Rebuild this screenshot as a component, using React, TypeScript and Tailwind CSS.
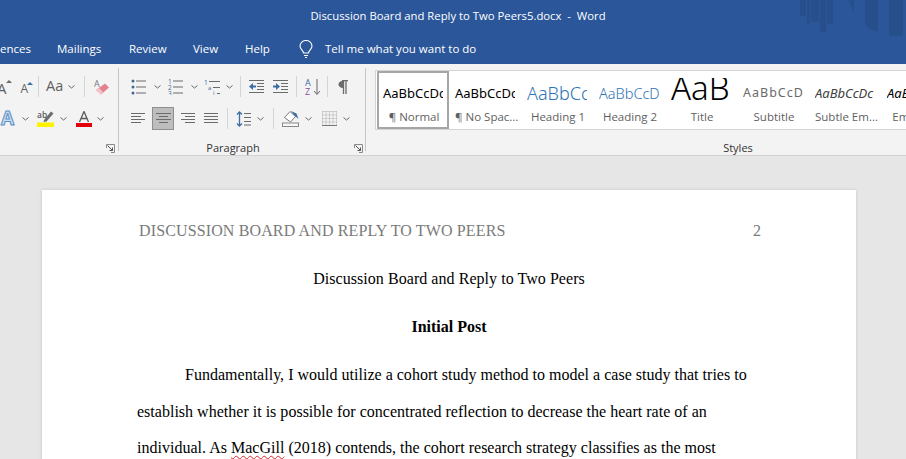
import React from "react";

const G = "#6b6b6b";
const Chev = ({ className = "" }: { className?: string }) => (
  <svg width="7" height="4" viewBox="0 0 7 4" className={`shrink-0 ${className}`}>
    <path d="M.5.5 3.5 3 6.5.5" fill="none" stroke="#666" strokeWidth="1" />
  </svg>
);
const Sep = ({ className = "" }: { className?: string }) => <div className={`w-px h-[21px] bg-[#d4d4d4] shrink-0 ${className}`} />;

const Lines = ({ rows, className = "" }: { rows: [number, number][]; className?: string }) => (
  <svg width="15" height="13" viewBox="0 0 15 13" className={`shrink-0 ${className}`}>
    {rows.map(([a, b], i) => (
      <path key={i} d={`M${a} ${1.5 + i * 3}H${b}`} stroke={G} strokeWidth="1" />
    ))}
  </svg>
);

const Launcher = ({ className = "" }: { className?: string }) => (
  <svg width="9" height="9" viewBox="0 0 9 9" className={`shrink-0 ${className}`}>
    <path d="M.5 4V.5H8.500V8.500H5" fill="none" stroke="#8a8a8a" />
    <path d="M1.500 1.500 6.500 6.500M6.500 3.500V6.500H3.500" fill="none" stroke="#555" />
  </svg>
);

const Bullets = ({ kind, className = "" }: { kind: "b" | "n"; className?: string }) => (
  <svg width="15" height="16" viewBox="0 0 15 16" className={`shrink-0 ${className}`}>
    {[2, 8, 14].map((y, i) => (
      <g key={y}>
        <path d={`M5 ${y}H15`} stroke={G} />
        {kind === "b" ? (
          <circle cx="2" cy={y} r="1.500" fill="#44688f" />
        ) : (
          <text x="0" y={y + 2.500} fontSize="6.500" fill="#44688f" fontFamily="Open Sans">{i + 1}</text>
        )}
      </g>
    ))}
  </svg>
);

const Multi = ({ className = "" }: { className?: string }) => (
  <svg width="17" height="16" viewBox="0 0 17 16" className={`shrink-0 ${className}`}>
    <text x="0" y="6" fontSize="6.500" fill="#44688f" fontFamily="Open Sans">1</text>
    <path d="M5 2.500H16M9 8.500H16M13 14.500H16" stroke={G} />
    <text x="4" y="11" fontSize="6" fill="#44688f" fontFamily="Open Sans">a</text>
    <text x="9" y="16" fontSize="6" fill="#44688f" fontFamily="Open Sans">i</text>
  </svg>
);

const Indent = ({ flip, className = "" }: { flip?: boolean; className?: string }) => (
  <svg width="17" height="13" viewBox="0 0 17 13" className={`shrink-0 ${className}`}>
    <path d="M1 .5H16M9 3.500H16M9 6.500H16M9 9.500H16M1 12.500H16" stroke={G} />
    {flip ? (
      <path d="M1 5.500H4V3L8 6.500 4 10V7.500H1Z" fill="#3d6ea5" />
    ) : (
      <path d="M8 5.500H5V3L1 6.500 5 10V7.500H8Z" fill="#3d6ea5" />
    )}
  </svg>
);

const Sort = ({ className = "" }: { className?: string }) => (
  <svg width="16" height="18" viewBox="0 0 16 18" className={`shrink-0 ${className}`}>
    <text x="0" y="8" fontSize="9" fontFamily="Open Sans" fill="#3d6ea5">A</text>
    <text x="0" y="17" fontSize="9" fontFamily="Open Sans" fill="#8a4f9e">Z</text>
    <path d="M12 1V16M9 13 12 16.500 15 13" fill="none" stroke="#666" />
  </svg>
);

const Pilcrow = ({ className = "" }: { className?: string }) => (
  <svg width="10" height="14" viewBox="0 0 10 14" className={`shrink-0 ${className}`}>
    <path d="M4 .5H10M5.500 .5V14M8 .5V14" fill="none" stroke={G} strokeWidth="1.300" />
    <path d="M5 1C1.500 1 .5 3 .5 4.500S2 8 5 8Z" fill={G} />
  </svg>
);

const LineSpacing = ({ className = "" }: { className?: string }) => (
  <svg width="15" height="16" viewBox="0 0 15 16" className={`shrink-0 ${className}`}>
    <path d="M3.500 1V15M1 3.500 3.500 1 6 3.500M1 12.500 3.500 15 6 12.500" fill="none" stroke="#3d6ea5" strokeWidth="1.300" />
    <path d="M8 2.500H15M8 6.500H15M8 10.500H15M8 14H15" stroke={G} />
  </svg>
);

const Shading = ({ className = "" }: { className?: string }) => (
  <svg width="17" height="17" viewBox="0 0 17 17" className={`shrink-0 ${className}`}>
    <path d="M2.500 7.500 8 1.500 13.500 6.500 8.500 12Z" fill="#fff" stroke="#777" />
    <path d="M9 1 14.500 3.500 16.500 9 13 6Z" fill="#3d6ea5" />
    <rect x=".5" y="13" width="16" height="3.500" fill="#f7f7f7" stroke="#888" />
  </svg>
);

const Borders = ({ className = "" }: { className?: string }) => (
  <svg width="15" height="15" viewBox="0 0 15 15" className={`shrink-0 ${className}`}>
    <path d="M.5.5H15M.5 7.500H15M7.500.5V15M.5.5V15M14.500.5V15M4 .5V15M11 .5V15M.5 4H15M.5 11H15" stroke="#aaa" strokeDasharray="1 1" fill="none" />
    <path d="M0 14.500H15" stroke="#777" />
  </svg>
);

const FontLetter = ({ color, className = "" }: { color: string; className?: string }) => (
  <span className={`relative font-['Open_Sans',sans-serif] leading-none text-[#5f5f5f] shrink-0 ${className}`}>
    A<span className="absolute right-[-5px] top-[-1px] w-0 h-0 border-x-[3px] border-x-transparent border-b-[3px]" style={{ borderBottomColor: color }} />
  </span>
);

const Eraser = ({ className = "" }: { className?: string }) => (
  <svg width="16" height="16" viewBox="0 0 16 16" className={`shrink-0 ${className}`}>
    <text x="0" y="8" fontSize="9" fontFamily="Open Sans" fill="#777">A</text>
    <path d="M2 11 11 4.500 15 8.500 7 15.500Z" fill="#e5818f" />
    <path d="M2 11 5 9 9 13 7 15.500Z" fill="#f3c3ca" />
  </svg>
);

const OutlineA = ({ className = "" }: { className?: string }) => (
  <span className={`w-[15px] text-[19px] leading-none font-['Open_Sans',sans-serif] text-[#c9dcf0] font-bold shrink-0 [-webkit-text-stroke:1px_#5d8fc4] ${className}`}>A</span>
);

const Highlight = ({ className = "" }: { className?: string }) => (
  <svg width="17" height="17" viewBox="0 0 17 17" className={`shrink-0 ${className}`}>
    <text x="0" y="8" fontSize="8.500" fontFamily="Open Sans" fontWeight="600" fill="#5a5a5a">ab</text>
    <path d="M7 10 14 1.500 16.500 3.500 9.500 11.500 6.500 12Z" fill="#6d6d6d" />
    <rect x="0" y="12.500" width="17" height="4.500" fill="#fff200" />
  </svg>
);

const ColorA = ({ className = "" }: { className?: string }) => (
  <svg width="16" height="16" viewBox="0 0 16 16" className={`shrink-0 ${className}`}>
    <path d="M3.500 11 8 .5 12.500 11M5 7.500H11" fill="none" stroke="#5a5a5a" strokeWidth="1.300" />
    <rect x="0" y="12" width="16" height="4" fill="#e2000f" />
  </svg>
);

const styles = [
  { p: "AaBbCcDc", l: "¶ Normal", cls: "text-[13px] text-black", selected: true },
  { p: "AaBbCcDc", l: "¶ No Spac...", cls: "text-[13px] text-black" },
  { p: "AaBbCc", l: "Heading 1", cls: "text-[18px] font-light text-[#2e74b5]" },
  { p: "AaBbCcD", l: "Heading 2", cls: "text-[14.500px] font-light text-[#2e74b5]" },
  { p: "AaB", l: "Title", cls: "text-[33px] font-light text-black -mt-[12px]" },
  { p: "AaBbCcD", l: "Subtitle", cls: "text-[12.500px] text-[#6a6a6a] tracking-[1px]" },
  { p: "AaBbCcDc", l: "Subtle Em...", cls: "text-[13px] text-[#404040] italic" },
  { p: "AaBbCcDc", l: "Emphasis", cls: "text-[13px] text-black italic" },
];

export default function App() {
  return (
    <div className="w-[906px] h-[459px] overflow-hidden flex flex-col bg-[#e6e6e6] font-['Open_Sans',sans-serif]">
      <header className="relative h-[64px] shrink-0 bg-[#2b579a] text-white overflow-hidden">
        <svg width="106" height="40" viewBox="0 0 106 40" className="absolute right-0 top-0" fill="#274f8c">
          <path d="M0 0H6V16H0ZM7 0H10V24H7ZM11 0H19V22H11ZM20 0H26V32H20ZM27 0H33V24H27ZM48 0H54L54 12ZM65 0H78V32L68 28 65 22ZM89 0H103V36H89Z" />
        </svg>
        <div className="relative h-[32px] flex items-center justify-center text-[11.300px] pt-[1px] pl-[10px]">
          <span className="whitespace-pre">Discussion Board and Reply to Two Peers5.docx  -  Word</span>
        </div>
        <nav className="relative h-[32px] flex items-center text-[11.500px] pt-[1px] whitespace-nowrap">
          <span className="w-[57px] shrink-0 text-right pr-[27px] overflow-hidden">ences</span>
          <span className="w-[72px]">Mailings</span>
          <span className="w-[64px]">Review</span>
          <span className="w-[52px]">View</span>
          <span className="w-[54px]">Help</span>
          <svg width="14" height="18" viewBox="0 0 14 18" fill="none" stroke="#fff" strokeWidth="1.100" className="mr-[12px]">
            <path d="M4.500 13C4.500 10.500 1 9.500 1 6a6 5.500 0 0 1 12 0C13 9.500 9.500 10.500 9.500 13ZM5 15.500H9M6 17.500H8" />
          </svg>
          <span>Tell me what you want to do</span>
        </nav>
      </header>

      <section className="h-[92px] shrink-0 flex bg-[#f3f3f3] border-b border-[#d2d2d2] text-[#444]">
        <div className="w-[118px] shrink-0 flex flex-col overflow-hidden">
          <div className="h-[42px] mt-[1px] flex items-center pt-[1px]">
            <FontLetter color="#6b6b6b" className="text-[15px] -ml-[3px] mt-[3px]" />
            <FontLetter color="#3d6ea5" className="text-[12px] ml-[14px] mt-[5px]" />
            <Sep className="ml-[10px]" />
            <span className="ml-[7px] text-[14.500px] leading-none text-[#5f5f5f]">Aa</span>
            <Chev className="ml-[5px]" />
            <Sep className="ml-[9px]" />
            <Eraser className="ml-[9px]" />
          </div>
          <div className="h-[23px] flex items-center">
            <OutlineA className="ml-[1px]" />
            <Chev className="ml-[6px]" />
            <Highlight className="ml-[8px]" />
            <Chev className="ml-[6px]" />
            <ColorA className="ml-[9px]" />
            <Chev className="ml-[5px]" />
          </div>
          <div className="flex-1 flex items-end justify-end pb-[2px] pr-[3px]"><Launcher /></div>
        </div>
        <div className="w-px bg-[#c6c6c6] my-[4px] shrink-0" />
        <div className="w-[246px] shrink-0 flex flex-col relative">
          <div className="h-[42px] mt-[1px] flex items-center pt-[1px] pl-[12px]">
            <Bullets kind="b" />
            <Chev className="ml-[8px]" />
            <Bullets kind="n" className="ml-[7px]" />
            <Chev className="ml-[8px]" />
            <Multi className="ml-[6px]" />
            <Chev className="ml-[5px]" />
            <Sep className="ml-[7px]" />
            <Indent className="ml-[7px]" />
            <Indent flip className="ml-[7px]" />
            <Sep className="ml-[7px]" />
            <Sort className="ml-[8px]" />
            <Sep className="ml-[6px]" />
            <Pilcrow className="ml-[10px]" />
          </div>
          <div className="h-[23px] flex items-center pl-[12px]">
            <Lines rows={[[0, 14], [0, 10], [0, 14], [0, 10]]} />
            <div className="ml-[6px] w-[22px] h-[23px] bg-[#bdbdbd] border border-[#8f8f8f] flex items-center justify-center shrink-0">
              <Lines rows={[[0, 15], [3, 12], [0, 15], [3, 12]]} />
            </div>
            <Lines rows={[[1, 15], [5, 15], [1, 15], [5, 15]]} className="ml-[6px]" />
            <Lines rows={[[0, 14], [0, 14], [0, 14], [0, 14]]} className="ml-[9px]" />
            <Sep className="ml-[8px]" />
            <LineSpacing className="ml-[8px]" />
            <Chev className="ml-[6px]" />
            <Sep className="ml-[9px]" />
            <Shading className="ml-[8px]" />
            <Chev className="ml-[6px]" />
            <Borders className="ml-[10px]" />
            <Chev className="ml-[6px]" />
          </div>
          <div className="flex-1 flex items-end justify-center text-[11px] leading-none pb-[2px] pr-[18px] text-[#333]">Paragraph</div>
          <Launcher className="absolute right-[2px] bottom-[2px]" />
        </div>
        <div className="w-px bg-[#c6c6c6] my-[4px] shrink-0" />
        <div className="flex-1 min-w-0 flex flex-col">
          <div className="mt-[6px] ml-[9px] h-[60px] bg-white border border-[#d4d4d4] border-r-0 flex items-stretch overflow-hidden pl-px">
            {styles.map((s, i) => (
              <div
                key={i}
                className={`w-[72px] shrink-0 flex flex-col items-start overflow-hidden font-['Noto_Sans',sans-serif] ${s.selected ? "border-2 border-[#a6a6a6] pl-[4px]" : "border-2 border-transparent pl-[4px]"}`}
              >
                <div className="mt-[5px] h-[30px] w-[60px] flex items-center overflow-hidden whitespace-nowrap">
                  <span className={`leading-none ${s.cls}`}>{s.p}</span>
                </div>
                <div className="w-[62px] text-center text-[11.500px] leading-none text-[#5f5f5f] whitespace-nowrap pt-[3px] font-['Open_Sans',sans-serif]">{s.l}</div>
              </div>
            ))}
          </div>
          <div className="flex-1 flex items-end justify-center text-[11px] leading-none pb-[2px] pl-[204px] text-[#333]">Styles</div>
        </div>
      </section>

      <main className="flex-1 min-h-0 overflow-hidden pt-[34px] pl-[42px]">
        <article className="w-[814px] h-[400px] bg-white shadow-[0_0_3px_rgba(0,0,0,0.15)] font-['Liberation_Serif',serif] text-[16px] text-black pl-[95px] pr-[95px] pt-[32px]">
          <div className="flex justify-between text-[#7a7a7a] h-[18px] leading-[18px] pl-[2px]">
            <span className="tracking-[0.13px]">DISCUSSION BOARD AND REPLY TO TWO PEERS</span>
            <span>2</span>
          </div>
          <p className="mt-[30px] h-[18px] leading-[18px] text-center tracking-[0.05px]">Discussion Board and Reply to Two Peers</p>
          <p className="mt-[30px] h-[18px] leading-[18px] text-center font-bold">Initial Post</p>
          <div className="mt-[21px] leading-[36.500px] whitespace-nowrap tracking-[0.012px]">
            <p className="pl-[48px]">Fundamentally, I would utilize a cohort study method to model a case study that tries to</p>
            <p>establish whether it is possible for concentrated reflection to decrease the heart rate of an</p>
            <p>individual. As <span className="underline decoration-wavy decoration-[#d9252a] decoration-1 underline-offset-2">MacGill</span> (2018) contends, the cohort research strategy classifies as the most</p>
          </div>
        </article>
      </main>
    </div>
  );
}
